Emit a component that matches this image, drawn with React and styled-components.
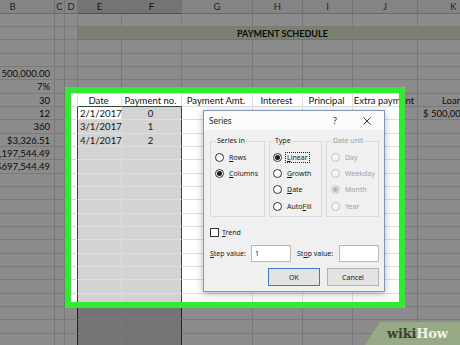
import React from 'react';
import styled, { createGlobalStyle } from 'styled-components';

const Global = createGlobalStyle`
  html, body { margin: 0; padding: 0; width: 460px; height: 345px; overflow: hidden; background: #fff; }
  #root { width: 460px; height: 345px; }
`;

const COLS = [84, 10, 13, 44, 60, 71, 50, 50, 65, 72];
const LETTERS = ['B', 'C', 'D', 'E', 'F', 'G', 'H', 'I', 'J', 'K'];
const ROWS = 25;
const rowHeights = (() => {
  const h = [];
  let prev = 14;
  for (let k = 1; k <= ROWS; k++) {
    const pos = Math.floor(14 + (40 * k) / 3);
    h.push(pos - prev);
    prev = pos;
  }
  return h;
})();

const r = (t) => ({ t, align: 'right' });
const c = (t) => ({ t, align: 'center' });
const l = (t) => ({ t, align: 'left' });

const DATA = {
  4: { 0: r('500,000.00') },
  5: { 0: r('7%') },
  6: {
    0: r('30'), 3: c('Date'), 4: c('Payment no.'), 5: c('Payment Amt.'),
    6: c('Interest'), 7: c('Principal'), 8: c('Extra payment'),
    9: { t: 'Loan amount', align: 'left', padL: 24 },
  },
  7: { 0: r('12'), 3: l('2/1/2017'), 4: c('0'), 9: { t: '$ 500,000.00', align: 'left', padL: 5 } },
  8: { 0: r('360'), 3: l('3/1/2017'), 4: c('1') },
  9: { 0: r('$3,326.51'), 3: l('4/1/2017'), 4: c('2') },
  10: { 0: r('1,197,544.49') },
  11: { 0: r('$697,544.49') },
};

const SEL_BORDER = '#2c4637';

const Page = styled.div`
  position: relative;
  width: 460px;
  height: 345px;
  overflow: hidden;
  background: #fff;
  font-family: Lato, "Liberation Sans", sans-serif;
`;

const Sheet = styled.div`
  display: grid;
  grid-template-columns: ${COLS.map((w) => `${w}px`).join(' ')};
  grid-template-rows: 14px ${rowHeights.map((h) => `${h}px`).join(' ')};
  margin-left: -29px;
  width: 519px;
`;

const ColHead = styled.div`
  box-sizing: border-box;
  display: flex;
  align-items: center;
  justify-content: center;
  font-size: 9.5px;
  color: ${(p) => (p.$sel ? '#262626' : '#3c3c3c')};
  background: ${(p) => (p.$sel ? '#d4d4d4' : '#f1f1f1')};
  border-right: 1px solid #d0d0d0;
  border-bottom: 1px solid ${(p) => (p.$sel ? '#8a9a8f' : '#c4c4c4')};
`;

const Cell = styled.div`
  box-sizing: border-box;
  display: flex;
  align-items: center;
  justify-content: ${(p) => (p.$align === 'right' ? 'flex-end' : p.$align === 'center' ? 'center' : 'flex-start')};
  padding: 0 ${(p) => p.$padR}px 0 ${(p) => p.$padL}px;
  white-space: nowrap;
  font-size: 9.5px;
  color: #141414;
  background: ${(p) => (p.$active ? '#fff' : p.$sel ? '#d3d3d3' : 'transparent')};
  border-right: 1px solid ${(p) => p.$rc || '#dddddd'};
  border-bottom: 1px solid ${(p) => p.$bc || '#dddddd'};
  min-width: 0;
`;

const Band = styled.div`
  grid-column: 4 / -1;
  box-sizing: border-box;
  display: flex;
  align-items: center;
  padding-left: 159px;
  background: #dfeacc;
  border-bottom: 1px solid #cdd8bb;
  font-size: 9px;
  font-weight: 700;
  color: #151515;
  white-space: nowrap;
`;

const Frame = styled.div`
  position: absolute;
  left: 65px;
  top: 87px;
  width: 340px;
  height: 221px;
  box-sizing: border-box;
  border: 6px solid #33e933;
  border-radius: 2px;
  box-shadow: 0 0 0 700px rgba(0, 0, 0, 0.45);
  z-index: 1;
`;

const Dialog = styled.div`
  position: absolute;
  left: 203px;
  top: 110px;
  width: 182px;
  box-sizing: border-box;
  border: 1px solid #8196bb;
  background: #f0f0f0;
  box-shadow: 0 2px 7px rgba(0, 0, 0, 0.3);
  font-family: "Noto Sans", "Open Sans", sans-serif;
  font-size: 7px;
  color: #1a1a1a;
  z-index: 2;
`;

const TitleBar = styled.div`
  height: 19px;
  display: flex;
  align-items: center;
  justify-content: space-between;
  background: #fbfbfb;
  padding-left: 5px;
`;

const Title = styled.span`
  font-size: 8px;
  color: #1a1a1a;
`;

const TitleIcons = styled.div`
  display: flex;
  align-items: center;
  gap: 10px;
  padding-right: 5px;
`;

const HelpBtn = styled.span`
  width: 20px;
  text-align: center;
  font-size: 9px;
  color: #222;
`;

const CloseBtn = styled.span`
  width: 24px;
  display: flex;
  justify-content: center;
  align-items: center;
`;

const Body = styled.div`
  padding: 7px 5px 5px 6px;
  display: flex;
  flex-direction: column;
`;

const Groups = styled.div`
  display: flex;
  gap: 4px;
  height: 80px;
`;

const Group = styled.fieldset`
  margin: 0;
  min-width: 0;
  width: ${(p) => p.$w}px;
  box-sizing: border-box;
  border: 1px solid #dadada;
  padding: 4px 0 0 ${(p) => p.$pl}px;
  display: flex;
  flex-direction: column;
  & > legend {
    padding: 0 1px;
    margin-left: 1px;
    font-size: 7px;
    line-height: 8px;
    color: ${(p) => (p.$disabled ? '#9c9c9c' : '#1a1a1a')};
  }
`;

const Option = styled.div`
  height: 16.3px;
  display: flex;
  align-items: center;
  gap: 4px;
  color: ${(p) => (p.$disabled ? '#a3a3a3' : '#1a1a1a')};
`;

const Radio = styled.span`
  width: 9px;
  height: 9px;
  box-sizing: border-box;
  border-radius: 50%;
  border: 1px solid ${(p) => (p.$disabled ? '#c2c2c2' : '#333')};
  background: ${(p) => (p.$disabled ? '#f4f4f4' : '#fff')};
  display: flex;
  align-items: center;
  justify-content: center;
  flex: none;
  &::after {
    content: '';
    width: 5px;
    height: 5px;
    border-radius: 50%;
    background: ${(p) => (p.$disabled ? '#b5b5b5' : '#1a1a1a')};
    display: ${(p) => (p.$checked ? 'block' : 'none')};
  }
`;

const OptLabel = styled.span`
  line-height: 9px;
  padding: 0 1px;
  border: 1px dotted ${(p) => (p.$focus ? '#222' : 'transparent')};
  margin-left: -1px;
`;

const CheckRow = styled.div`
  margin-top: 11px;
  height: 9px;
  display: flex;
  align-items: center;
  gap: 3px;
`;

const CheckBox = styled.span`
  width: 9px;
  height: 9px;
  box-sizing: border-box;
  border: 1px solid #333;
  background: #fff;
`;

const StepRow = styled.div`
  margin-top: 8px;
  height: 17px;
  display: flex;
  align-items: center;
`;

const StepLabel = styled.span`
  width: ${(p) => p.$w}px;
  margin-left: ${(p) => p.$ml}px;
`;

const Input = styled.div`
  width: 40px;
  height: 17px;
  box-sizing: border-box;
  border: 1px solid #b9b9b9;
  background: #fff;
  padding: 1px 3px;
  font-size: 7px;
  line-height: 13px;
`;

const ButtonRow = styled.div`
  margin-top: 6px;
  display: flex;
  justify-content: flex-end;
  gap: 7px;
`;

const Button = styled.div`
  width: 52px;
  height: 18px;
  box-sizing: border-box;
  border: 1px solid ${(p) => (p.$primary ? '#3a7cc7' : '#b3b3b3')};
  background: #e3e3e3;
  display: flex;
  align-items: center;
  justify-content: center;
  font-size: 7px;
  color: #1a1a1a;
`;

const Logo = styled.div`
  position: absolute;
  left: 365px;
  bottom: 0;
  width: 95px;
  height: 23px;
  background: #97a985;
  clip-path: polygon(15px 0, 100% 0, 100% 100%, 0 100%);
  padding-left: 22px;
  box-sizing: border-box;
  font-family: "DejaVu Serif", "Liberation Serif", serif;
  font-weight: 700;
  font-size: 13px;
  line-height: 23px;
  z-index: 3;
  letter-spacing: -0.2px;
`;

const LogoDark = styled.span`
  color: #36412f;
`;

const LogoLight = styled.span`
  color: #eef2e8;
`;

function SheetGrid() {
  const cells = [];
  LETTERS.forEach((L, i) => {
    cells.push(
      <ColHead key={`h${i}`} $sel={i === 3 || i === 4}>
        {L}
      </ColHead>
    );
  });
  for (let row = 0; row < ROWS; row++) {
    for (let col = 0; col < COLS.length; col++) {
      if (row === 1 && col === 3) {
        cells.push(<Band key={`b${row}`}>PAYMENT SCHEDULE</Band>);
        break;
      }
      const d = (DATA[row] && DATA[row][col]) || null;
      const inSel = row >= 7 && (col === 3 || col === 4);
      const active = row === 7 && col === 3;
      let rc;
      let bc;
      if (row >= 7 && (col === 2 || col === 4)) rc = SEL_BORDER;
      if (row === 6 && (col === 3 || col === 4)) bc = SEL_BORDER;
      cells.push(
        <Cell
          key={`c${row}-${col}`}
          $align={d ? d.align : 'left'}
          $padL={d && d.padL != null ? d.padL : 2}
          $padR={4}
          $sel={inSel}
          $active={active}
          $rc={rc}
          $bc={bc}
        >
          {d ? d.t : ''}
        </Cell>
      );
    }
  }
  return <Sheet>{cells}</Sheet>;
}

function Opt({ label, checked, disabled, focus }) {
  return (
    <Option $disabled={disabled}>
      <Radio $checked={checked} $disabled={disabled} />
      <OptLabel $focus={focus}>{label}</OptLabel>
    </Option>
  );
}

function SeriesDialog() {
  return (
    <Dialog>
      <TitleBar>
        <Title>Series</Title>
        <TitleIcons>
          <HelpBtn>?</HelpBtn>
          <CloseBtn>
            <svg width="8" height="8" viewBox="0 0 8 8">
              <path d="M0.5 0.5 L7.5 7.5 M7.5 0.5 L0.5 7.5" stroke="#222" strokeWidth="0.9" fill="none" />
            </svg>
          </CloseBtn>
        </TitleIcons>
      </TitleBar>
      <Body>
        <Groups>
          <Group $w={55} $pl={4}>
            <legend>Series in</legend>
            <Opt label={<><u>R</u>ows</>} />
            <Opt label={<><u>C</u>olumns</>} checked />
          </Group>
          <Group $w={53} $pl={3}>
            <legend>Type</legend>
            <Opt label={<><u>L</u>inear</>} checked focus />
            <Opt label={<><u>G</u>rowth</>} />
            <Opt label={<><u>D</u>ate</>} />
            <Opt label={<>Auto<u>F</u>ill</>} />
          </Group>
          <Group $w={53} $pl={4} $disabled>
            <legend>Date unit</legend>
            <Opt label="Day" disabled />
            <Opt label="Weekday" disabled />
            <Opt label="Month" disabled checked />
            <Opt label="Year" disabled />
          </Group>
        </Groups>
        <CheckRow>
          <CheckBox />
          <span>
            <u>T</u>rend
          </span>
        </CheckRow>
        <StepRow>
          <StepLabel $w={41} $ml={0}>
            <u>S</u>tep value:
          </StepLabel>
          <Input>1</Input>
          <StepLabel $w={42} $ml={6}>
            St<u>o</u>p value:
          </StepLabel>
          <Input />
        </StepRow>
        <ButtonRow>
          <Button $primary>OK</Button>
          <Button>Cancel</Button>
        </ButtonRow>
      </Body>
    </Dialog>
  );
}

export default function App() {
  return (
    <Page>
      <Global />
      <SheetGrid />
      <Frame />
      <SeriesDialog />
      <Logo>
        <LogoDark>wiki</LogoDark>
        <LogoLight>How</LogoLight>
      </Logo>
    </Page>
  );
}
